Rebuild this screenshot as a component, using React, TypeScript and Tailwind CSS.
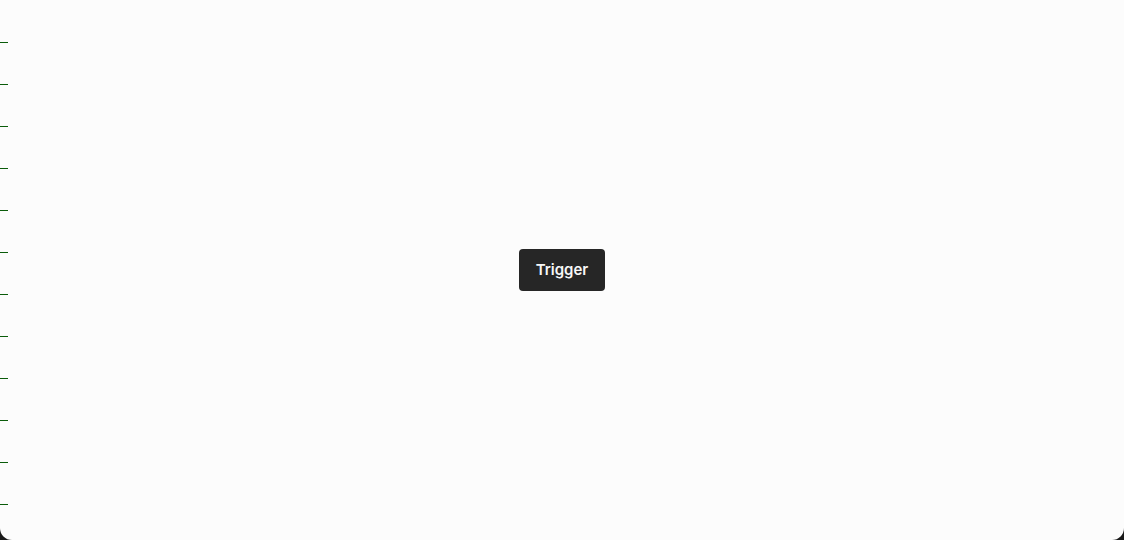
import React from "react";

const ticks = Array.from({ length: 12 }, (_, i) => i);

export default function App() {
  return (
    <div className="h-[540px] w-[1124px] bg-[#1a1a1a]">
      <div className="relative flex h-full w-full items-center justify-center overflow-hidden rounded-b-[12px] bg-[#fcfcfc]">
        {/* ruler ticks on the left edge */}
        <div className="absolute left-0 top-0 flex flex-col gap-[41px] pt-[42px]">
          {ticks.map((i) => (
            <div key={i} className="h-px w-2 bg-[#0a5c0a]" />
          ))}
        </div>

        <button
          type="button"
          className="h-[42px] w-[86px] rounded-[4px] bg-[#262626] text-[15px] font-semibold text-[#f7f7f7]"
          style={{ fontFamily: 'Inter, "Liberation Sans", Arial, sans-serif' }}
        >
          Trigger
        </button>
      </div>
    </div>
  );
}
